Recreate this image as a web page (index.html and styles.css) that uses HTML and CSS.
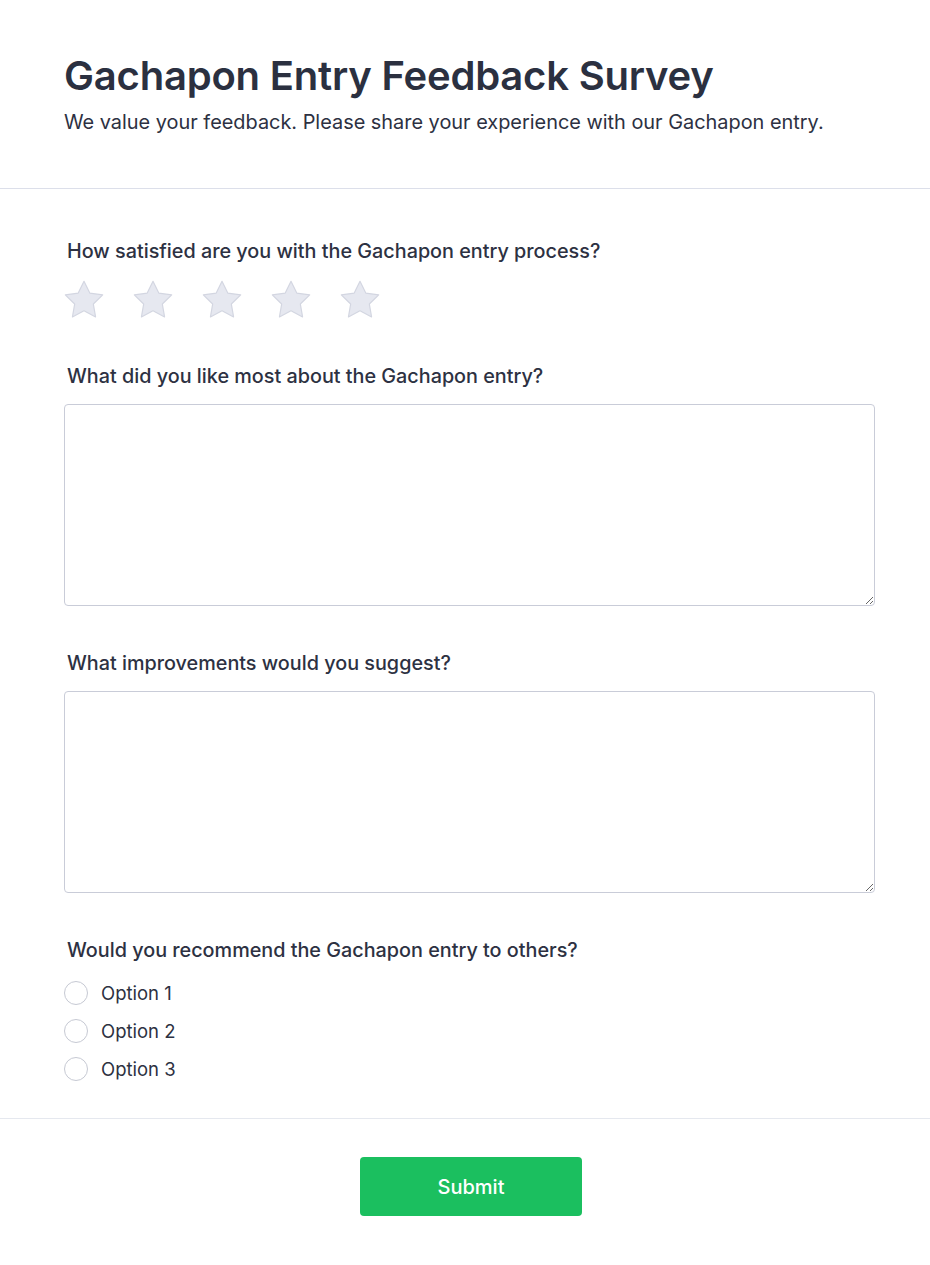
FILE: index.html
```html
<!DOCTYPE html>
<html lang="en">
<head>
<meta charset="utf-8">
<title>Gachapon Entry Feedback Survey</title>
<link rel="stylesheet" href="styles.css">
</head>
<body>
<div class="page">
  <header class="header">
    <h1 class="title">Gachapon Entry Feedback Survey</h1>
    <p class="subtitle">We value your feedback. Please share your experience with our Gachapon entry.</p>
  </header>
  <main class="body">
    <div class="question">
      <label class="label">How satisfied are you with the Gachapon entry process?</label>
      <div class="stars">
        <svg class="star" viewBox="0 0 24 24"><path d="M12 0.8L15.47 7.83 23.22 8.95 17.61 14.42 18.94 22.15 12 18.5 5.06 22.15 6.39 14.42 0.78 8.95 8.53 7.83Z"/></svg>
        <svg class="star" viewBox="0 0 24 24"><path d="M12 0.8L15.47 7.83 23.22 8.95 17.61 14.42 18.94 22.15 12 18.5 5.06 22.15 6.39 14.42 0.78 8.95 8.53 7.83Z"/></svg>
        <svg class="star" viewBox="0 0 24 24"><path d="M12 0.8L15.47 7.83 23.22 8.95 17.61 14.42 18.94 22.15 12 18.5 5.06 22.15 6.39 14.42 0.78 8.95 8.53 7.83Z"/></svg>
        <svg class="star" viewBox="0 0 24 24"><path d="M12 0.8L15.47 7.83 23.22 8.95 17.61 14.42 18.94 22.15 12 18.5 5.06 22.15 6.39 14.42 0.78 8.95 8.53 7.83Z"/></svg>
        <svg class="star" viewBox="0 0 24 24"><path d="M12 0.8L15.47 7.83 23.22 8.95 17.61 14.42 18.94 22.15 12 18.5 5.06 22.15 6.39 14.42 0.78 8.95 8.53 7.83Z"/></svg>
      </div>
    </div>
    <div class="question">
      <label class="label" for="q2">What did you like most about the Gachapon entry?</label>
      <textarea id="q2" class="textarea"></textarea>
    </div>
    <div class="question">
      <label class="label" for="q3">What improvements would you suggest?</label>
      <textarea id="q3" class="textarea"></textarea>
    </div>
    <div class="question">
      <label class="label">Would you recommend the Gachapon entry to others?</label>
      <div class="options">
        <label class="option"><input type="radio" name="rec" class="radio"><span>Option 1</span></label>
        <label class="option"><input type="radio" name="rec" class="radio"><span>Option 2</span></label>
        <label class="option"><input type="radio" name="rec" class="radio"><span>Option 3</span></label>
      </div>
    </div>
  </main>
  <footer class="footer">
    <button class="submit" type="button">Submit</button>
  </footer>
</div>
</body>
</html>
```

FILE: styles.css
```css
* { box-sizing: border-box; }
html, body { margin: 0; padding: 0; background: #ffffff; }
body {
  font-family: Inter, "Noto Sans", "Liberation Sans", sans-serif;
  color: #2d3142;
}
.page { width: 930px; }
.header {
  padding: 52px 55px 52px 64px;
  border-bottom: 1px solid #dcdfea;
}
.title {
  margin: 0;
  font-size: 40px;
  line-height: 48px;
  font-weight: 600;
  color: #2b3040;
  letter-spacing: -0.2px;
}
.subtitle {
  margin: 8px 0 0;
  font-size: 19.9px;
  line-height: 28px;
  font-weight: 400;
}
.body {
  padding: 48px 55px 34px 64px;
  display: flex;
  flex-direction: column;
  gap: 43px;
  border-bottom: 1px solid #e5e8ef;
}
.question { display: flex; flex-direction: column; }
.label {
  display: block;
  margin: 0 0 14px 3px;
  font-size: 19.8px;
  line-height: 28px;
  font-weight: 500;
  color: #2d3142;
}
.stars {
  display: flex;
  gap: 29px;
  height: 40px;
  margin-top: 1px;
  margin-bottom: -1px;
  align-items: center;
}
.star { width: 40px; height: 40px; flex: none; }
.star path {
  fill: #e6e8f0;
  stroke: #d3d6e1;
  stroke-width: 0.7;
  stroke-linejoin: round;
}
.textarea {
  display: block;
  width: 811px;
  height: 202px;
  margin: 0;
  border: 1px solid #c9ccd8;
  border-radius: 4px;
  padding: 10px 12px;
  font-family: inherit;
  font-size: 16px;
  resize: vertical;
  background: #fff;
}
.options { display: flex; flex-direction: column; gap: 8px; }
.option {
  display: flex;
  align-items: center;
  gap: 13px;
  height: 30px;
  font-size: 18.5px;
  line-height: 28px;
  color: #2d3142;
}
.radio {
  appearance: none;
  -webkit-appearance: none;
  margin: 0;
  width: 24px;
  height: 24px;
  border: 1.5px solid #c6c9d3;
  border-radius: 50%;
  background: #fff;
}
.footer {
  display: flex;
  justify-content: center;
  padding: 38px 0 50px;
}
.submit {
  width: 222px;
  height: 59px;
  border: none;
  border-radius: 4px;
  background: #1bbf5f;
  color: #ffffff;
  font-family: inherit;
  font-size: 20px;
  font-weight: 500;
  margin-left: 12px;
}
```
